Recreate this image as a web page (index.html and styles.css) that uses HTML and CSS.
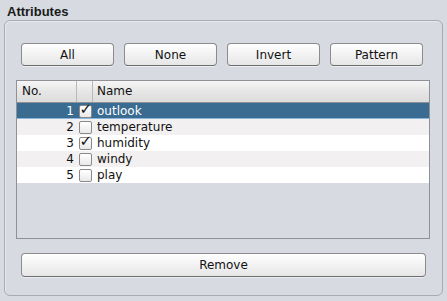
FILE: index.html
```html
<!DOCTYPE html>
<html>
<head>
    <title>Attributes</title>
    <link rel="stylesheet" href="styles.css">
</head>
<body>
    <div class="title">Attributes</div>
    <div class="group">
        <div class="toolbar">
            <button class="button">All</button>
            <button class="button">None</button>
            <button class="button">Invert</button>
            <button class="button">Pattern</button>
        </div>
        <div class="table">
            <div class="row header">
                <div class="cell no">No.</div>
                <div class="cell check"></div>
                <div class="cell name">Name</div>
            </div>
            <div class="row selected">
                <div class="cell no">1</div>
                <div class="cell check"><span class="box"><span class="mark">&#10003;</span></span></div>
                <div class="cell name">outlook</div>
            </div>
            <div class="row odd">
                <div class="cell no">2</div>
                <div class="cell check"><span class="box"></span></div>
                <div class="cell name">temperature</div>
            </div>
            <div class="row">
                <div class="cell no">3</div>
                <div class="cell check"><span class="box"><span class="mark">&#10003;</span></span></div>
                <div class="cell name">humidity</div>
            </div>
            <div class="row odd">
                <div class="cell no">4</div>
                <div class="cell check"><span class="box"></span></div>
                <div class="cell name">windy</div>
            </div>
            <div class="row">
                <div class="cell no">5</div>
                <div class="cell check"><span class="box"></span></div>
                <div class="cell name">play</div>
            </div>
        </div>
        <button class="button remove">Remove</button>
    </div>
</body>
</html>
```

FILE: styles.css
```css
body {
    margin: 0;
    background-color: #d7dae0;
    font-family: "DejaVu Sans", sans-serif;
    font-size: 12px;
    color: #111;
    width: 447px;
    height: 301px;
    overflow: hidden;
}
.title {
    font-family: "Liberation Sans", sans-serif;
    font-weight: bold;
    font-size: 13px;
    padding: 4px 0 0 7px;
    height: 16px;
    color: #1a1a1a;
}
.group {
    box-sizing: border-box;
    margin-left: 4px;
    width: 439px;
    height: 276px;
    border: 1px solid #a9abb0;
    border-radius: 6px;
    box-shadow: inset 1px 1px 0 #e6e8ec;
    display: flex;
    flex-direction: column;
}
.toolbar {
    display: flex;
    gap: 10px;
    margin: 22px 0 0 16px;
}
.button {
    box-sizing: border-box;
    width: 93px;
    height: 23px;
    padding: 0;
    font-family: "DejaVu Sans", sans-serif;
    font-size: 12px;
    color: #111;
    border: 1px solid #8c8c8c;
    border-bottom-color: #6e6e6e;
    border-radius: 4px;
    background: linear-gradient(#ffffff, #f2f2f2 50%, #e6e6e6);
    box-shadow: 0 1px 0 #eceef1;
}
.table {
    box-sizing: border-box;
    margin: 14px 0 0 11px;
    width: 414px;
    height: 159px;
    border: 1px solid #8f9196;
    background-color: #d7dae0;
}
.row {
    display: grid;
    grid-template-columns: 60px 16px 1fr;
    height: 16px;
    line-height: 16px;
    background-color: #ffffff;
}
.row.odd {
    background-color: #f2f0f0;
}
.row.header {
    height: 22px;
    line-height: 20px;
    box-sizing: border-box;
    border-bottom: 1px solid #8f9196;
    background: linear-gradient(#f6f6f6, #e6e6e6 50%, #dcdcdc);
}
.header .cell {
    border-right: 1px solid #b9b9b9;
}
.header .cell.name {
    border-right: none;
}
.header .no {
    text-align: left;
    padding: 0 0 0 5px;
}
.row.selected {
    background-color: #3a6b91;
    color: #ffffff;
    box-shadow: inset 0 -1px 0 #8cb6dc;
}
.cell {
    white-space: nowrap;
    overflow: hidden;
}
.no {
    text-align: right;
    padding-right: 3px;
}
.name {
    padding-left: 4px;
}
.check {
    display: flex;
    align-items: center;
    justify-content: center;
    overflow: visible;
}
.box {
    position: relative;
    box-sizing: border-box;
    width: 13px;
    height: 13px;
    border: 1px solid #8a8a8a;
    border-radius: 2px;
    background: linear-gradient(#ffffff, #e9e9e9);
}
.mark {
    position: absolute;
    left: 0;
    top: -4px;
    color: #111;
    font-size: 15px;
    font-weight: bold;
    line-height: 15px;
}
.remove {
    margin: 14px 0 0 16px;
    width: 405px;
    height: 24px;
}
```
